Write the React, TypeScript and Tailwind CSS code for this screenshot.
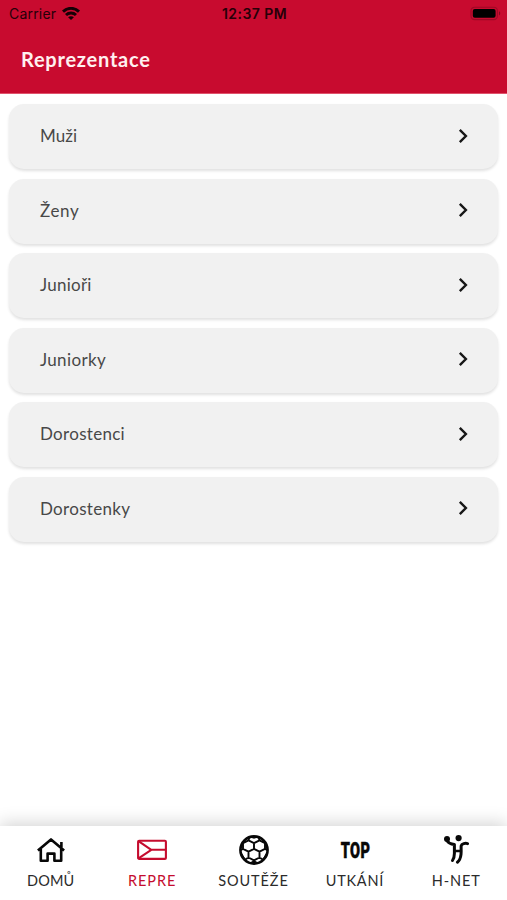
import type { ReactNode } from "react";

const rows = [
  { label: "Muži", tracking: "tracking-[0.1px]" },
  { label: "Ženy", tracking: "tracking-[0.6px]" },
  { label: "Junioři", tracking: "tracking-[0.25px]" },
  { label: "Juniorky", tracking: "tracking-[0.35px]" },
  { label: "Dorostenci", tracking: "tracking-[0.3px]" },
  { label: "Dorostenky", tracking: "tracking-[0.3px]" },
];

function WifiIcon() {
  return (
    <svg width="18" height="14" viewBox="0 0 18 14" fill="none" stroke="#160005" strokeWidth="2.9">
      <path d="M1 4.6C5.5.2 12.5.2 17 4.6" />
      <path d="M4 8c2.8-2.7 7.2-2.7 10 0" />
      <path d="M9 13.1 6.1 10.3c1.6-1.5 4.2-1.5 5.8 0Z" fill="#160005" stroke="none" />
    </svg>
  );
}

function BatteryIcon() {
  return (
    <svg width="31" height="14" viewBox="0 0 31 14" className="overflow-visible">
      <rect x="1" y="0.2" width="26.4" height="12.4" rx="3.6" fill="none" stroke="#9d0926" strokeWidth="1.1" />
      <rect x="2.8" y="2" width="22.8" height="8.8" rx="2" fill="#000" />
      <path d="M29 4.3c1.7.7 1.7 3.5 0 4.2Z" fill="#820820" />
    </svg>
  );
}

function HomeIcon() {
  return (
    <svg width="30" height="30" viewBox="0 0 30 30" fill="none" stroke="#080808" strokeWidth="2.6" strokeLinejoin="round">
      <path d="M1.9 15.6 15 4.4l13.1 11.2M4.8 14v11.8h6.8v-7.2h6.8v7.2h6.8V14M25.4 13V7" />
    </svg>
  );
}

function FlagIcon() {
  return (
    <svg width="30" height="30" viewBox="0 0 30 30" fill="none" stroke="#c50c2e" strokeWidth="2.1" strokeLinejoin="round">
      <rect x="1.1" y="5.7" width="27.8" height="18.2" rx="1" />
      <path d="m1.5 6.2 12.8 8.6L1.5 23.4M14.3 14.8H29" />
    </svg>
  );
}

function BallIcon() {
  return (
    <svg width="30" height="30" viewBox="0 0 30 30" fill="none" stroke="#080808" strokeWidth="1.9" strokeLinejoin="round">
      <circle cx="15" cy="15" r="13.6" strokeWidth="2.6" />
      <path d="M9.5 5.3 15 8.1v5.8l-5.5 2.8L4 13.9V8.1ZM20.5 5.3 26 8.1v5.8l-5.5 2.8-5.5-2.8V8.1ZM9.5 16.7v5.8l5.5 2.8 5.5-2.8v-5.8M9.5 22.5 5.5 25M20.5 22.5l4 2.5M15 25.3V28M4 13.9l-2.5 1.3M26 13.9l2.5 1.3M9.5 5.3 10.3 3M20.5 5.3 19.7 3" />
      <path d="m11.3 2.2 3.7 1 3.7-1ZM5.5 5.6 4 8.1l-2 4ZM24.5 5.6 26 8.1l2 4ZM2 17.5l2.5 4.8L7 25.5ZM28 17.5l-2.5 4.8-2.5 3.2ZM11.5 27.8 15 25.3l3.5 2.5Z" fill="#080808" strokeWidth="0.9" />
    </svg>
  );
}

function PlayerIcon() {
  return (
    <svg width="30" height="30" viewBox="0 0 30 30" fill="none" stroke="#080808" strokeLinecap="round" strokeLinejoin="round" className="overflow-visible">
      <circle cx="6" cy="3.9" r="3" fill="#080808" stroke="none" />
      <circle cx="17.6" cy="3.1" r="3.1" fill="#080808" stroke="none" />
      <path d="M5.8 5.2c1.3 2.9 3.6 4 7.6 4.4v9c0 3.3-.6 5-1.9 6.9" strokeWidth="3" />
      <path d="M26.6 8.6c-2.2-.6-6 0-6.4 2.2-.3 2 .2 5.2-.2 8.6-.4 3.5-1.4 6.1-3.6 7.8" strokeWidth="3" />
      <path d="M14 16h6" strokeWidth="2.3" />
    </svg>
  );
}

function TopMark() {
  return (
    <span className="mt-[2px] ml-[2px] inline-block scale-x-[0.66] font-['Roboto',sans-serif] text-[22px] leading-[30px] font-black tracking-[0.6px] text-[#080808] [-webkit-text-stroke:0.5px_#080808]">
      TOP
    </span>
  );
}

function Tab({ icon, label, className }: { icon: ReactNode; label: string; className: string }) {
  return (
    <button className="flex min-w-0 flex-1 flex-col items-center pt-[9px]">
      <span className="flex h-[30px] items-center justify-center">{icon}</span>
      <span className={`mt-[6px] text-[14.5px] leading-5 whitespace-nowrap ${className}`}>{label}</span>
    </button>
  );
}

export default function App() {
  return (
    <div className="flex h-[900px] w-[507px] flex-col overflow-hidden bg-white font-['Lato',sans-serif]">
      <header className="h-[94px] shrink-0 border-b border-[#e0536c] bg-[#c80b2f]">
        <div className="grid h-[27px] grid-cols-3 items-center pr-[6px] pl-[9px] font-['Inter',sans-serif] text-[14px] text-[#260008]">
          <div className="flex items-center gap-[6px]">
            <span className="tracking-[0.2px]">Carrier</span>
            <WifiIcon />
          </div>
          <span className="-ml-[1px] text-center font-semibold tracking-[0.45px]">12:37 PM</span>
          <span className="flex justify-end">
            <BatteryIcon />
          </span>
        </div>
        <h1 className="mt-[18px] pl-[21px] text-[20px] leading-7 font-bold tracking-[0.75px] text-[#fff0f0]">
          Reprezentace
        </h1>
      </header>

      <main className="flex flex-1 flex-col gap-[9.5px] px-[9px] pt-[10px]">
        {rows.map((row) => (
          <button
            key={row.label}
            className="flex h-[65px] w-full items-center justify-between rounded-[15px] bg-[#f1f1f1] pr-[30px] pb-[1.5px] pl-[31px] text-left text-[17px] text-[#484848] shadow-[0_2px_3px_rgba(0,0,0,0.12)]"
          >
            <span className={row.tracking}>{row.label}</span>
            <svg width="10" height="16" viewBox="0 0 10 16" fill="none" stroke="#171717" strokeWidth="2.4">
              <path d="m1.8 1.9 6.1 6.1-6.1 6.1" />
            </svg>
          </button>
        ))}
      </main>

      <nav className="flex h-[74px] shrink-0 bg-white text-[#2b2b2b] shadow-[0_-3px_16px_rgba(0,0,0,0.17)]">
        <Tab icon={<HomeIcon />} label="DOMŮ" className="tracking-[0.1px]" />
        <Tab icon={<FlagIcon />} label="REPRE" className="tracking-[0.9px] text-[#c50c2e]" />
        <Tab icon={<BallIcon />} label="SOUTĚŽE" className="tracking-[0.9px]" />
        <Tab icon={<TopMark />} label="UTKÁNÍ" className="tracking-[0.75px]" />
        <Tab icon={<PlayerIcon />} label="H-NET" className="tracking-[0.9px]" />
      </nav>
    </div>
  );
}
